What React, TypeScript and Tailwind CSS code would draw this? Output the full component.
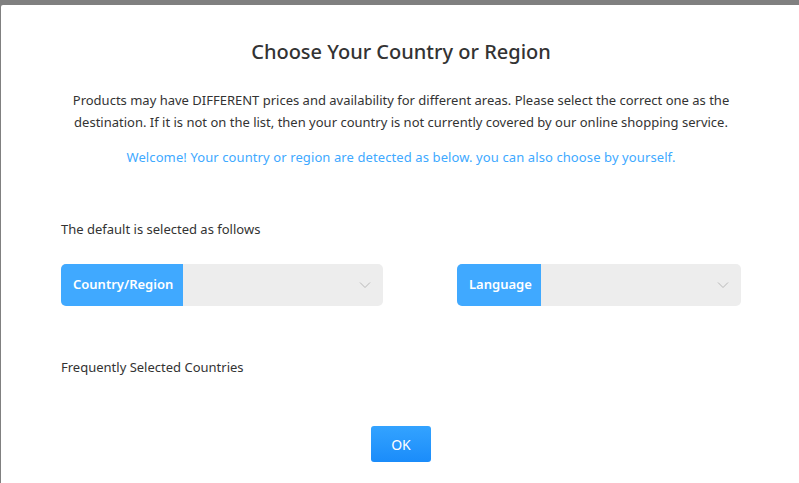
import React from "react";

function Chevron() {
  return (
    <svg width="12" height="8" viewBox="0 0 12 8" className="mr-[12px]">
      <path d="M1 1.5 L6 6.5 L11 1.5" fill="none" stroke="#b8b8b8" strokeWidth="1" />
    </svg>
  );
}

function Select({ label, labelWidth }: { label: string; labelWidth: string }) {
  return (
    <div className="flex h-[42px] overflow-hidden rounded-[5px] bg-[#ededed]">
      <div className={`flex items-center bg-[#40a9ff] pl-3 text-[13px] font-semibold whitespace-nowrap text-white ${labelWidth}`}>
        {label}
      </div>
      <div className="flex flex-1 items-center justify-end">
        <Chevron />
      </div>
    </div>
  );
}

export default function App() {
  return (
    <div
      className="h-[483px] w-[799px] overflow-hidden bg-[#808080] pl-[1px] pt-[5px]"
      style={{ fontFamily: '"Noto Sans", "Open Sans", sans-serif' }}
    >
      <div className="h-[600px] w-[820px] rounded-tl-[2px] bg-white pl-[60px] pt-[33px]">
        <div className="w-[680px] text-[#333]">
          <h1 className="text-center text-[20px] leading-[28px] font-medium text-[#333]">Choose Your Country or Region</h1>
          <p className="mt-[23px] text-center text-[13px] leading-[22px] text-[#333]">
            Products may have DIFFERENT prices and availability for different areas. Please select the correct one as the destination. If it is not on the list, then your country is not currently covered by our online shopping service.
          </p>
          <p className="mt-[13px] text-center text-[13px] leading-[22px] tracking-[0.1px] text-[#40a9ff]">
            Welcome! Your country or region are detected as below. you can also choose by yourself.
          </p>
          <p className="mt-[50px] text-[13px] leading-[22px] text-[#333]">The default is selected as follows</p>
          <div className="mt-[24px] flex justify-between">
            <div className="w-[322px]">
              <Select label="Country/Region" labelWidth="w-[122px]" />
            </div>
            <div className="w-[284px]">
              <Select label="Language" labelWidth="w-[84px]" />
            </div>
          </div>
          <p className="mt-[50px] text-[13px] leading-[22px] text-[#333]">Frequently Selected Countries</p>
          <div className="mt-[48px] flex justify-center">
            <button className="h-[36px] w-[60px] rounded-[3px] bg-gradient-to-b from-[#33a3ff] to-[#1a8cfa] text-[14px] text-white">
              OK
            </button>
          </div>
        </div>
      </div>
    </div>
  );
}
